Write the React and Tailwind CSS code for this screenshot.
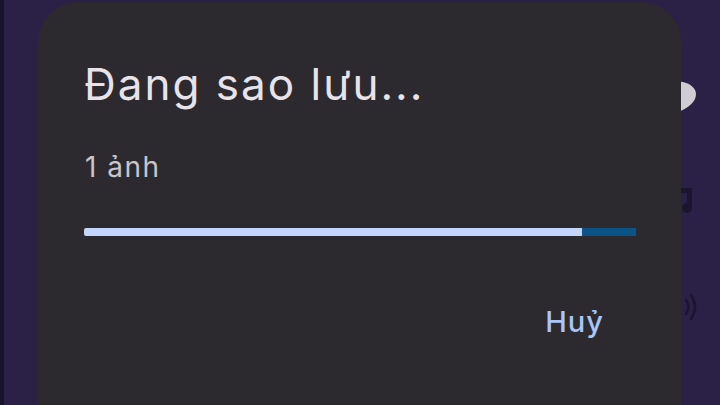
import React from 'react';

export default function App() {
  return (
    <div className="relative h-[405px] w-[720px] overflow-hidden bg-[#2b2146]" style={{ fontFamily: 'Inter, "Open Sans", sans-serif' }}>
      {/* Background edge */}
      <div className="absolute left-0 top-0 h-full w-[4px] bg-[#17132a]" />

      {/* Icons behind the dialog */}
      <svg className="absolute left-[670px] top-[78px]" width="30" height="36" viewBox="0 0 30 36">
        <path d="M4 4 C14 2 26 8 26 16 C26 24 18 30 8 34 L4 34 Z" fill="#cfcdd3" />
      </svg>
      <svg className="absolute left-[674px] top-[186px]" width="24" height="32" viewBox="0 0 24 32">
        <path d="M4 2 H18 V22 A5 5 0 1 1 13 17 V7 H4 Z" fill="#1b1530" />
      </svg>
      <svg className="absolute left-[672px] top-[290px]" width="30" height="36" viewBox="0 0 30 36">
        <path d="M14 10 Q19 17 14 24" stroke="#1b1530" strokeWidth="2.5" fill="none" strokeLinecap="round" />
        <path d="M19 5 Q27 17 19 29" stroke="#1b1530" strokeWidth="2.5" fill="none" strokeLinecap="round" />
      </svg>

      {/* Dialog */}
      <div className="absolute left-[38px] top-[2px] h-[440px] w-[643px] rounded-[40px] bg-[#2c2a2f] px-[46px] pt-[54px]">
        <h1 className="text-[44px] leading-[56px] font-normal tracking-[2px] text-[#e7e3e9]">Đang sao lưu...</h1>
        <p className="mt-[39px] ml-[1px] text-[28px] leading-[32px] tracking-[1.5px] text-[#c8c5cb]">1 ảnh</p>
        <div className="mt-[45px] flex h-[8px] w-[552px]">
          <div className="h-full w-[498px] rounded-l-[2px] bg-[#c2d5fa]" />
          <div className="h-full flex-1 bg-[#0b5487]" />
        </div>
        <div className="mt-[68px] flex justify-end pr-[31px]">
          <span className="text-[29px] leading-[36px] font-medium tracking-[1px] text-[#a9c5f7]">Huỷ</span>
        </div>
      </div>
    </div>
  );
}
